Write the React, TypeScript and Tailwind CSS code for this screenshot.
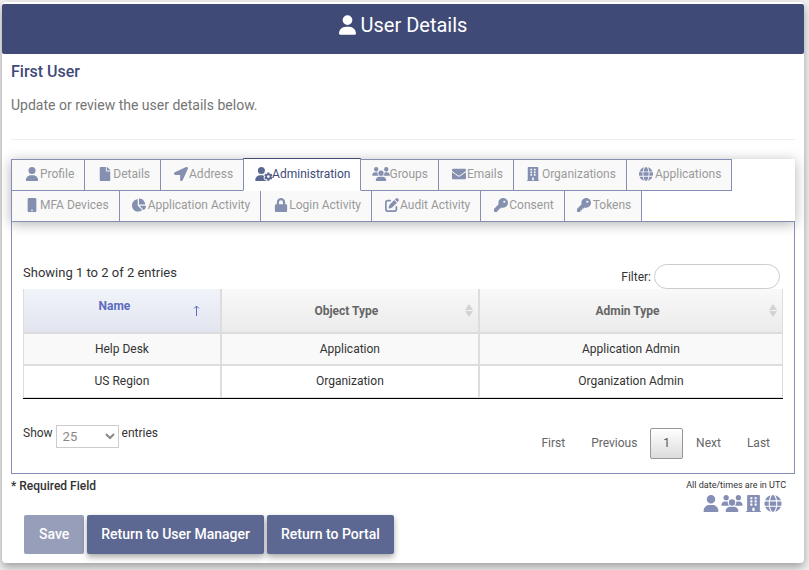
import type { ReactNode } from 'react'
import {
  FaBuilding,
  FaChartPie,
  FaEnvelope,
  FaFile,
  FaLocationArrow,
  FaLock,
  FaMobile,
} from 'react-icons/fa'
import { FaGlobe, FaKey, FaPenToSquare, FaUser, FaUserGear, FaUsers } from 'react-icons/fa6'

interface Tab {
  label: string
  icon: ReactNode
  active?: boolean
}

const TAB_ROWS: Tab[][] = [
  [
    { label: 'Profile', icon: <FaUser /> },
    { label: 'Details', icon: <FaFile /> },
    { label: 'Address', icon: <FaLocationArrow /> },
    { label: 'Administration', icon: <FaUserGear className="w-[18px] shrink-0" />, active: true },
    { label: 'Groups', icon: <FaUsers className="w-[18px] shrink-0" /> },
    { label: 'Emails', icon: <FaEnvelope /> },
    { label: 'Organizations', icon: <FaBuilding /> },
    { label: 'Applications', icon: <FaGlobe /> },
  ],
  [
    { label: 'MFA Devices', icon: <FaMobile /> },
    { label: 'Application Activity', icon: <FaChartPie /> },
    { label: 'Login Activity', icon: <FaLock /> },
    { label: 'Audit Activity', icon: <FaPenToSquare /> },
    { label: 'Consent', icon: <FaKey /> },
    { label: 'Tokens', icon: <FaKey /> },
  ],
]

const ROWS = [
  { name: 'Help Desk', object: 'Application', admin: 'Application Admin' },
  { name: 'US Region', object: 'Organization', admin: 'Organization Admin' },
]

function TabButton({ tab }: { tab: Tab }) {
  return (
    <button
      type="button"
      role="tab"
      aria-selected={!!tab.active}
      className={`-ml-px flex items-center border pr-2.5 pl-[11px] text-xs ${
        tab.active
          ? 'z-10 -mt-px h-[33px] border-[#858fb5] border-t-[#404a77] border-b-white bg-white pb-px text-[#404a77]'
          : 'h-8 border-[#858fb5] bg-[#f9f9f9] pb-0.5 text-[#999]'
      }`}
    >
      <span
        className={`flex w-[17px] justify-center text-sm ${tab.active ? 'text-[#5d6892]' : 'text-[#858fb0]'}`}
      >
        {tab.icon}
      </span>
      {tab.label}
    </button>
  )
}

function SortArrows() {
  return (
    <svg viewBox="0 0 8 13" className="h-[13px] w-2 fill-[#d3d3d3]">
      <path d="M4 0l4 6H0zM4 13l4-6H0z" />
    </svg>
  )
}

function HeadCell({ label }: { label: string }) {
  return (
    <th
      scope="col"
      className="border-x-2 border-b-2 border-[#ddd] bg-linear-to-b from-[#f9f9f9] to-[#ebebeb] p-0 last:border-r"
    >
      <button type="button" className="flex h-[43px] w-full items-center pr-[5px] pl-1.5 font-bold text-[#666]">
        <span className="flex-1">{label}</span>
        <SortArrows />
      </button>
    </th>
  )
}

function Cell({ text }: { text: string }) {
  return <td className="border-x-2 border-[#ddd] first:border-l last:border-r">{text}</td>
}

function PageButton({ label, current }: { label: string; current?: boolean }) {
  return (
    <button
      type="button"
      aria-current={current ? 'page' : undefined}
      className={`h-[31px] rounded-xs border px-3 ${
        current
          ? 'border-[#979797] bg-linear-to-b from-white to-[#dcdcdc] text-[#555]'
          : 'border-transparent text-[#666]'
      }`}
    >
      {label}
    </button>
  )
}

export default function App() {
  return (
    <div className="min-h-screen bg-[#f1f1f1] pt-0.5 pr-[5px] pb-[7px] pl-0.5 font-['Roboto','Liberation_Sans',sans-serif] text-xs text-[#333]">
      <main className="rounded-sm bg-white pt-0.5 pb-[9px] shadow-[0_4px_10px_rgba(0,0,0,0.35)]">
        <header className="flex h-[50px] justify-center rounded-xs bg-[#404a77] pt-[7px] text-white">
          <h1 className="flex h-7 items-center gap-[5px] text-xl">
            <FaUser className="w-[17px]" />
            User Details
          </h1>
        </header>

        <div className="px-[9px]">
          <h2 className="mt-1.5 text-base leading-6 font-medium text-[#404a77]">First User</h2>
          <p className="mt-[11px] text-sm leading-5 text-[#757575]">Update or review the user details below.</p>
          <hr className="mt-6 border-[#eee]" />

          <div role="tablist" className="mt-[19px] border-b border-[#858fb5] bg-white shadow-[0_2px_12px_rgba(0,0,0,0.3)]">
            {TAB_ROWS.map((row, i) => (
              <div key={i} className="flex h-[31px] pl-px">
                {row.map((tab) => (
                  <TabButton key={tab.label} tab={tab} />
                ))}
              </div>
            ))}
          </div>

          <section className="border border-t-0 border-[#858fb5] pt-[42px] pr-[11px] pb-3.5 pl-[11px]">
            <div className="flex items-start justify-between">
              <p className="text-[13px] leading-[18px]">Showing 1 to 2 of 2 entries</p>
              <label className="mr-[3px] flex items-center gap-[3px]">
                Filter:
                <input type="search" className="h-[25px] w-[126px] rounded-full border border-[#ccc] bg-white px-2.5" />
              </label>
            </div>

            <div className="border-b border-black">
              <table className="w-full table-fixed border-collapse text-center">
                <colgroup>
                  <col className="w-[26%]" />
                  <col className="w-[34%]" />
                  <col className="w-[40%]" />
                </colgroup>
                <thead>
                  <tr>
                    <th
                      scope="col"
                      aria-sort="ascending"
                      className="border-r-2 border-b-2 border-l border-[#ddd] bg-linear-to-b from-[#f0f3f8] to-[#e2e5ef] p-0"
                    >
                      <button type="button" className="flex h-[43px] w-full items-center pr-5 pl-3 font-bold text-[#5c6bc0]">
                        <span className="flex-1 pb-2.5">Name</span>
                        <svg viewBox="0 0 7 11" className="h-[11px] w-[7px] fill-none stroke-[#5c6bc0]">
                          <path d="M3.5 11V1M1 3.5l2.5-2.5 2.5 2.5" />
                        </svg>
                      </button>
                    </th>
                    <HeadCell label="Object Type" />
                    <HeadCell label="Admin Type" />
                  </tr>
                </thead>
                <tbody>
                  {ROWS.map((row) => (
                    <tr key={row.name} className="h-8 border-b-2 border-[#ddd] odd:bg-[#f9f9f9] last:border-b">
                      <Cell text={row.name} />
                      <Cell text={row.object} />
                      <Cell text={row.admin} />
                    </tr>
                  ))}
                </tbody>
              </table>
            </div>

            <div className="flex items-start justify-between pt-[26px]">
              <label className="flex">
                <span>Show</span>
                <select
                  defaultValue="25"
                  className="mx-[3px] h-[23px] w-[63px] border border-[#ccc] bg-white pl-0.5 text-[13px] text-[#888]"
                >
                  <option>10</option>
                  <option>25</option>
                  <option>50</option>
                </select>
                <span>entries</span>
              </label>
              <nav aria-label="Pages" className="mt-[3px] flex">
                <PageButton label="First" />
                <PageButton label="Previous" />
                <PageButton label="1" current />
                <PageButton label="Next" />
                <PageButton label="Last" />
              </nav>
            </div>
          </section>

          <div className="flex h-[41px] justify-between">
            <p className="pt-1 font-medium">* Required Field</p>
            <div className="mr-[9px] flex flex-col items-end pt-1 text-[9px] leading-[14px]">
              All date/times are in UTC
              <div className="mt-[3px] mr-1 flex items-center gap-0.5 text-[17px] text-[#858fb5]">
                <FaUser className="w-4" />
                <FaUsers className="w-[22px]" />
                <FaBuilding />
                <FaGlobe className="w-[18px]" />
              </div>
            </div>
          </div>

          <div className="flex gap-[3px] pl-[13px] text-sm font-medium text-white">
            <button type="button" disabled className="h-[39px] rounded-xs bg-[#979eb9] px-[15px]">
              Save
            </button>
            <button type="button" className="h-[39px] rounded-xs bg-[#5d6892] px-3.5 shadow-[0_3px_6px_rgba(0,0,0,0.35)]">
              Return to User Manager
            </button>
            <button type="button" className="h-[39px] rounded-xs bg-[#5d6892] px-3.5 shadow-[0_3px_6px_rgba(0,0,0,0.35)]">
              Return to Portal
            </button>
          </div>
        </div>
      </main>
    </div>
  )
}
